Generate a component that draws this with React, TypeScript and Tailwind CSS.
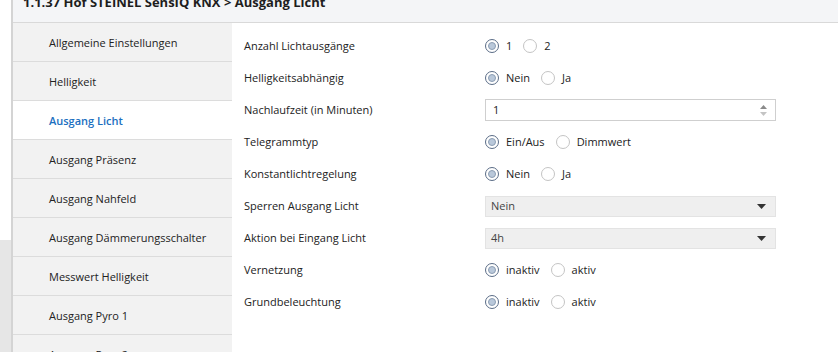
import React from 'react'

const MENU = [
  'Allgemeine Einstellungen',
  'Helligkeit',
  'Ausgang Licht',
  'Ausgang Präsenz',
  'Ausgang Nahfeld',
  'Ausgang Dämmerungsschalter',
  'Messwert Helligkeit',
  'Ausgang Pyro 1',
  'Ausgang Pyro 2',
]

type Row =
  | { label: string; kind: 'radio'; options: string[]; selected: number }
  | { label: string; kind: 'number'; value: string }
  | { label: string; kind: 'select'; value: string }

const ROWS: Row[] = [
  { label: 'Anzahl Lichtausgänge', kind: 'radio', options: ['1', '2'], selected: 0 },
  { label: 'Helligkeitsabhängig', kind: 'radio', options: ['Nein', 'Ja'], selected: 0 },
  { label: 'Nachlaufzeit (in Minuten)', kind: 'number', value: '1' },
  { label: 'Telegrammtyp', kind: 'radio', options: ['Ein/Aus', 'Dimmwert'], selected: 0 },
  { label: 'Konstantlichtregelung', kind: 'radio', options: ['Nein', 'Ja'], selected: 0 },
  { label: 'Sperren Ausgang Licht', kind: 'select', value: 'Nein' },
  { label: 'Aktion bei Eingang Licht', kind: 'select', value: '4h' },
  { label: 'Vernetzung', kind: 'radio', options: ['inaktiv', 'aktiv'], selected: 0 },
  { label: 'Grundbeleuchtung', kind: 'radio', options: ['inaktiv', 'aktiv'], selected: 0 },
]

function Radio({ checked }: { checked: boolean }) {
  return checked ? (
    <span className="w-[14px] h-[14px] rounded-full border border-[#5a6c86] bg-white flex items-center justify-center flex-shrink-0">
      <span className="w-[8px] h-[8px] rounded-full bg-[#b9c8da] border border-[#8c9db3]" />
    </span>
  ) : (
    <span className="w-[14px] h-[14px] rounded-full border border-[#c4c4c4] bg-white flex-shrink-0" />
  )
}

function Control({ row }: { row: Row }) {
  if (row.kind === 'radio') {
    return (
      <div className="flex items-center gap-[11px]">
        {row.options.map((opt, i) => (
          <div key={i} className="flex items-center gap-[7px]">
            <Radio checked={i === row.selected} />
            <span>{opt}</span>
          </div>
        ))}
      </div>
    )
  }
  if (row.kind === 'number') {
    return (
      <div className="w-[291px] h-[22px] border border-[#cfcfcf] bg-white flex items-center justify-between pl-[7px] pr-[8px]">
        <span>{row.value}</span>
        {/* spinner */}
        <div className="flex flex-col gap-[3px]">
          <svg width="7" height="4" viewBox="0 0 7 4"><path d="M3.5 0 L7 4 L0 4 Z" fill="#8a8a8a" /></svg>
          <svg width="7" height="4" viewBox="0 0 7 4"><path d="M0 0 L7 0 L3.5 4 Z" fill="#c4c4c4" /></svg>
        </div>
      </div>
    )
  }
  return (
    <div className="w-[291px] h-[21px] border border-[#e3e3e3] bg-[#efefef] flex items-center justify-between pl-[5px] pr-[9px] text-[#444]">
      <span>{row.value}</span>
      <svg width="9" height="5" viewBox="0 0 9 5"><path d="M0 0 L9 0 L4.5 5 Z" fill="#333" /></svg>
    </div>
  )
}

export default function App() {
  return (
    <div
      className="w-[838px] h-[352px] overflow-hidden bg-white flex text-[11px] text-[#222]"
      style={{ fontFamily: '"Open Sans", "Noto Sans", sans-serif' }}
    >
      {/* left backdrop strip */}
      <div className="w-[11px] flex flex-col">
        <div className="h-[240px] bg-white" />
        <div className="flex-1 bg-[#e6e6e6]" />
      </div>

      <div className="flex-1 flex flex-col border-l-2 border-[#d4d4d4] min-w-0">
        {/* Header */}
        <div className="h-[23px] bg-[#f4f5f7] border-b border-[#d9d9d9] pl-[10px] overflow-hidden flex-shrink-0">
          <div className="-mt-[8px] text-[13px] font-bold leading-[20px] text-[#1e1e1e] whitespace-nowrap">
            1.1.37 Hof STEINEL SensIQ KNX &gt; Ausgang Licht
          </div>
        </div>

        <div className="flex flex-1 min-h-0">
          {/* Sidebar */}
          <div className="w-[219px] flex-shrink-0 flex flex-col">
            {MENU.map((item, i) => {
              const active = i === 2
              return (
                <div
                  key={i}
                  className={`h-[39px] flex-shrink-0 flex items-center pl-[36px] pt-[2px] border-b border-[#dcdcdc] ${
                    active ? 'bg-white text-[#1b6fbf] font-semibold' : 'bg-[#f2f2f2]'
                  }`}
                >
                  {item}
                </div>
              )
            })}
          </div>

          {/* Parameters */}
          <div className="flex-1 pl-[12px] pt-[7px]">
            {ROWS.map((row, i) => (
              <div key={i} className="h-[32px] flex items-center">
                <div className="w-[241px] flex-shrink-0">{row.label}</div>
                <Control row={row} />
              </div>
            ))}
          </div>
        </div>
      </div>
    </div>
  )
}
